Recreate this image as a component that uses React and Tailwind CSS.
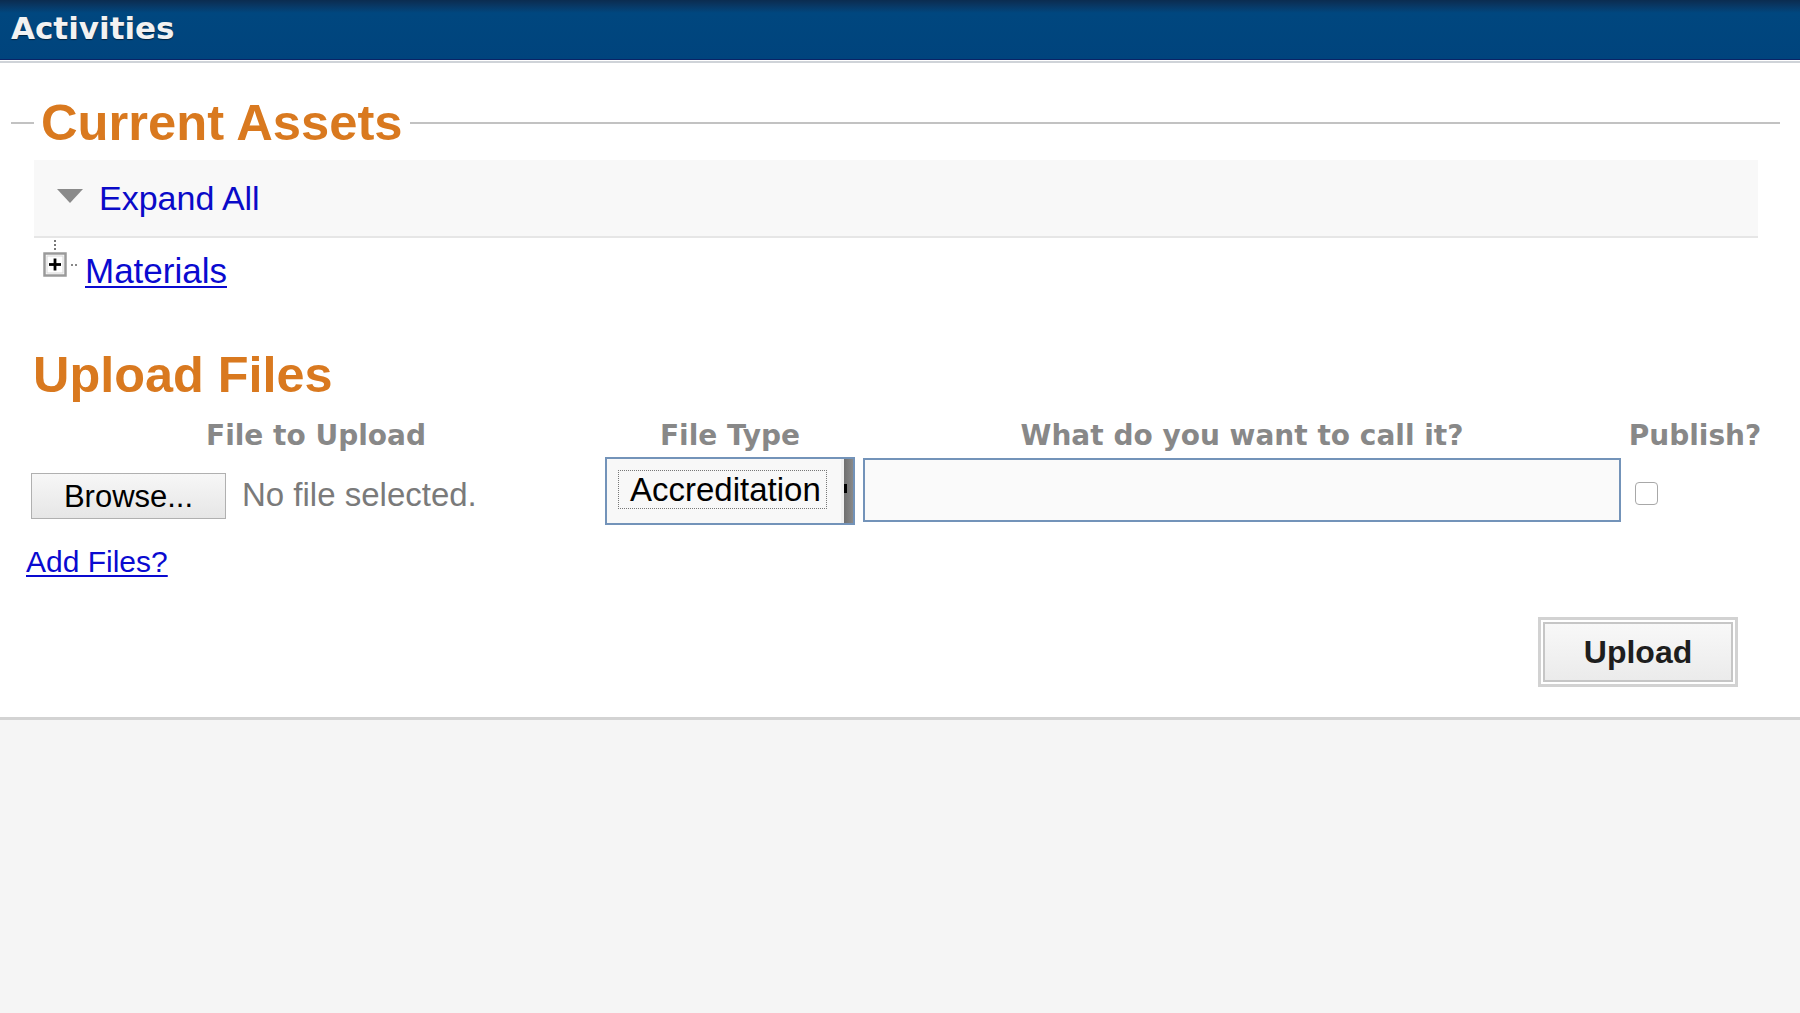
import React from "react";

function TreeIcon() {
  return (
    <svg width="42" height="42" viewBox="0 0 42 42" className="shrink-0">
      <rect x="12" y="2" width="2" height="2" fill="#777" />
      <rect x="12" y="6" width="2" height="2" fill="#777" />
      <rect x="12" y="10" width="2" height="2" fill="#777" />
      <rect x="2.5" y="15.5" width="21" height="22" fill="#fff" stroke="#9a9a9a" strokeWidth="2.5" />
      <rect x="5" y="18" width="16" height="17" fill="none" stroke="#d6d6d6" strokeWidth="1" />
      <line x1="7" y1="26.5" x2="19" y2="26.5" stroke="#000" strokeWidth="2.8" />
      <line x1="13" y1="20.5" x2="13" y2="32.5" stroke="#000" strokeWidth="2.8" />
      <rect x="29" y="26" width="2" height="2" fill="#888" />
      <rect x="33" y="26" width="2" height="2" fill="#888" />
    </svg>
  );
}

export default function App() {
  return (
    <div className="min-h-screen bg-[#f5f5f5] font-['Liberation_Sans',Arial,sans-serif]">
      {/* Header */}
      <div className="h-[60px] bg-gradient-to-b from-[#0b2c50] via-[#00477f] via-[22%] to-[#00447d] border-b border-[#0a2466] flex items-center pl-[11px]">
        <span className="font-['DejaVu_Sans',Verdana,sans-serif] font-bold text-[31px] leading-none text-[#f2f2f2] [text-shadow:0_1px_1px_rgba(0,0,0,0.5)] -mt-[3px]">
          Activities
        </span>
      </div>
      <div className="h-[1px] bg-white" />
      <div className="h-[2px] bg-[#cfd3d8]" />

      {/* White panel */}
      <div className="bg-white pt-[35px] pb-[30px] border-b-[3px] border-[#d3d3d3]">
        {/* Legend */}
        <div className="flex items-center h-[50px] pl-[11px] pr-[20px]">
          <div className="w-[23px] h-[2px] bg-[#c2c2c2]" />
          <h2 className="ml-[7px] text-[50.7px] leading-[50px] font-bold text-[#d9791f]">Current Assets</h2>
          <div className="ml-[7px] flex-1 h-[2px] bg-[#c2c2c2]" />
        </div>

        {/* Expand All bar */}
        <div className="mt-[12px] ml-[34px] mr-[42px] h-[78px] bg-[#f8f8f8] border-b-2 border-[#e6e6e6] flex items-center pl-[23px]">
          <svg width="26" height="14" viewBox="0 0 26 14" className="shrink-0 -mt-[4px]">
            <polygon points="0,0 26,0 13,14" fill="#8a8a8a" />
          </svg>
          <span className="ml-[16px] text-[34px] leading-[34px] text-[#0a0ac8]">Expand All</span>
        </div>

        {/* Materials row */}
        <div className="flex items-start pl-[42px]">
          <TreeIcon />
          <a className="ml-[1px] mt-[16px] text-[35px] leading-[34px] text-[#0a0ad0] underline underline-offset-[3px] decoration-[2px]">
            Materials
          </a>
        </div>

        {/* Upload Files */}
        <h2 className="mt-[62px] pl-[33px] text-[50.4px] leading-[50px] font-bold text-[#d9791f]">Upload Files</h2>

        {/* Column headers */}
        <div className="mt-[19px] flex pl-[31px] font-['DejaVu_Sans',Verdana,sans-serif] font-bold text-[28px] leading-[34px] text-[#888888]">
          <div className="w-[570px] text-center">File to Upload</div>
          <div className="ml-[4px] w-[250px] text-center">File Type</div>
          <div className="ml-[8px] w-[758px] text-center">What do you want to call it?</div>
          <div className="ml-[7px] w-[134px] text-center">Publish?</div>
        </div>

        {/* Inputs row */}
        <div className="mt-[4px] flex items-start pl-[31px] h-[68px]">
          <div className="w-[570px] flex items-start">
            <div className="mt-[16px] w-[195px] h-[46px] border border-[#b0b0b0] bg-gradient-to-b from-[#f7f7f7] to-[#e6e6e6] flex items-center justify-center text-[31px] leading-none text-black">
              Browse...
            </div>
            <span className="ml-[16px] mt-[21px] text-[33px] leading-[34px] text-[#7a7a7a]">No file selected.</span>
          </div>
          <div className="ml-[4px] w-[250px] h-[68px] border-2 border-[#7393b9] bg-[#f8f8f8] flex items-stretch">
            <div className="ml-[11px] mt-[11px] w-[209px] h-[39px] border border-dotted border-[#777] flex items-center pl-[11px] text-[33px] leading-none text-black">
              Accreditation
            </div>
            <div className="ml-auto w-[12px] flex">
              <div className="w-[3px] bg-[#f0f0f0]" />
              <div className="flex-1 bg-gradient-to-r from-[#6f6f6f] to-[#8a8a8a] flex items-center">
                <div className="w-[3px] h-[9px] bg-black -mt-[6px]" />
              </div>
            </div>
          </div>
          <div className="ml-[8px] mt-[1px] w-[758px] h-[64px] border-2 border-[#7393b9] bg-[#fafafa]" />
          <div className="ml-[14px] mt-[25px] w-[23px] h-[23px] rounded-[4px] border-[1.5px] border-[#a8a8a8] bg-white" />
        </div>

        {/* Add Files */}
        <div className="mt-[20px] pl-[26px]">
          <a className="text-[30px] leading-[34px] text-[#0a0ad0] underline underline-offset-[3px] decoration-[2px]">Add Files?</a>
        </div>

        {/* Upload button */}
        <div className="mt-[38px] flex justify-end pr-[62px]">
          <div className="w-[200px] h-[70px] border-[3px] border-[#d2d2d2] p-[2px] bg-white">
            <div className="w-full h-full border-2 border-[#c6c6c6] bg-gradient-to-b from-[#f8f8f8] to-[#ebebeb] flex items-center justify-center text-[32px] font-bold leading-none text-[#1e1e1e]">
              Upload
            </div>
          </div>
        </div>
      </div>
    </div>
  );
}
